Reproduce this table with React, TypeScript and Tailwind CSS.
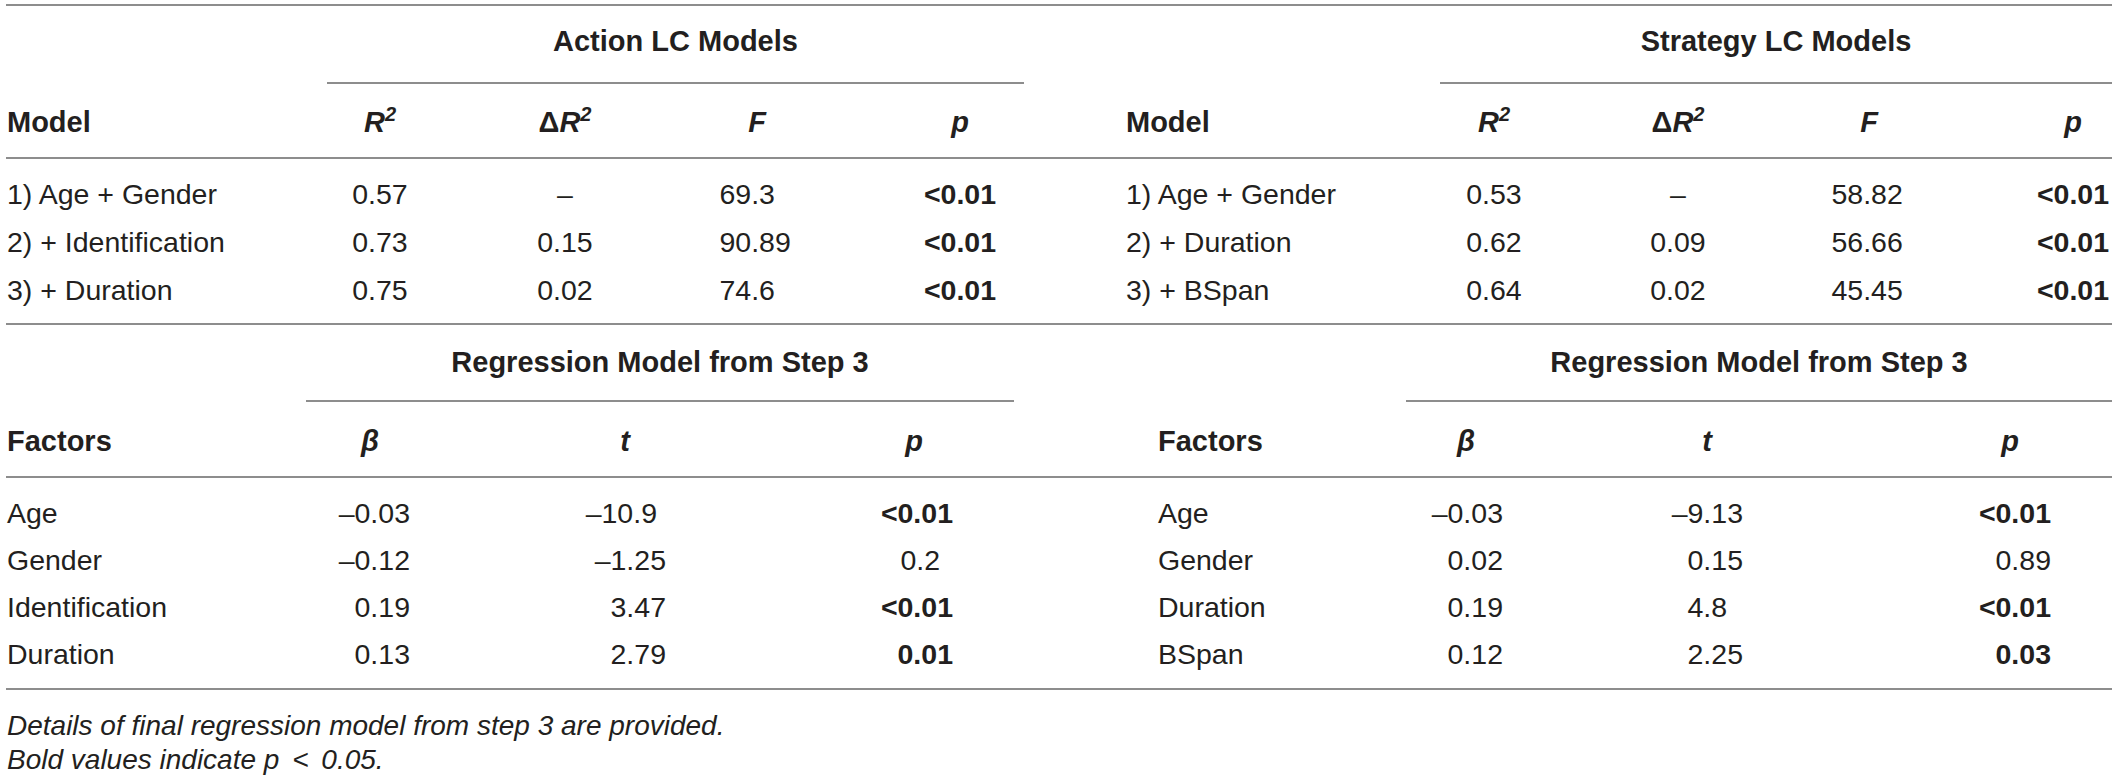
import React from "react";

type Cell = string | { t: string; b?: boolean; pad?: string };

const rule = "border-[#8d8d8d]";

// column boxes for the upper (LC models) block, left half then right half
const topCols = [
  "w-[314px] pl-[1px] text-left",
  "w-[120px] text-center",
  "ml-[65px] w-[120px] text-center",
  "ml-[72px] w-[120px] text-center",
  "ml-[83px] w-[120px] text-center",
  "ml-[106px] w-[308px] text-left",
  "w-[120px] text-center",
  "ml-[64px] w-[120px] text-center",
  "ml-[71px] w-[120px] text-center",
  "ml-[105px] w-[78px] text-center",
];

// column boxes for the lower (regression) block
const botCols = [
  "w-[300px] pl-[1px] text-left",
  "ml-[4px] w-[120px]",
  "ml-[135px] w-[120px]",
  "ml-[169px] w-[120px]",
  "ml-[184px] w-[248px] text-left",
  "w-[120px]",
  "ml-[121px] w-[120px]",
  "ml-[183px] w-[120px]",
];
const botVal = ["", "text-right pr-[20px]", "text-right pr-[19px]", "text-right pr-[21px]", "", "text-right pr-[23px]", "text-right pr-[24px]", "text-right pr-[19px]"];

const R2 = ({ delta }: { delta?: boolean }) => (
  <span className="font-bold italic">
    {delta && <span className="not-italic">Δ</span>}R
    <sup className="-top-[11px] text-[20px]">2</sup>
  </span>
);

const Hd = ({ children }: { children: React.ReactNode }) => (
  <span className="font-bold italic">{children}</span>
);

const topHead: React.ReactNode[] = [
  <span className="font-bold">Model</span>,
  <R2 />,
  <R2 delta />,
  <Hd>F</Hd>,
  <Hd>p</Hd>,
  <span className="font-bold">Model</span>,
  <R2 />,
  <R2 delta />,
  <Hd>F</Hd>,
  <Hd>p</Hd>,
];

const topRows: Cell[][] = [
  ["1) Age + Gender", "0.57", "–", "69.3", { t: "<0.01", b: true }, "1) Age + Gender", "0.53", "–", "58.82", { t: "<0.01", b: true }],
  ["2) + Identification", "0.73", "0.15", "90.89", { t: "<0.01", b: true }, "2) + Duration", "0.62", "0.09", "56.66", { t: "<0.01", b: true }],
  ["3) + Duration", "0.75", "0.02", "74.6", { t: "<0.01", b: true }, "3) + BSpan", "0.64", "0.02", "45.45", { t: "<0.01", b: true }],
];

const botHead: React.ReactNode[] = [
  <span className="font-bold">Factors</span>,
  <Hd>β</Hd>,
  <Hd>t</Hd>,
  <Hd>p</Hd>,
  <span className="font-bold">Factors</span>,
  <Hd>β</Hd>,
  <Hd>t</Hd>,
  <Hd>p</Hd>,
];

const botRows: Cell[][] = [
  ["Age", "–0.03", { t: "–10.9", pad: "mr-[9px]" }, { t: "<0.01", b: true }, "Age", "–0.03", "–9.13", { t: "<0.01", b: true }],
  ["Gender", "–0.12", "–1.25", { t: "0.2", pad: "mr-[13px]" }, "Gender", "0.02", "0.15", "0.89"],
  ["Identification", "0.19", "3.47", { t: "<0.01", b: true }, "Duration", "0.19", { t: "4.8", pad: "mr-[16px]" }, { t: "<0.01", b: true }],
  ["Duration", "0.13", "2.79", { t: "0.01", b: true }, "BSpan", "0.12", "2.25", { t: "0.03", b: true }],
];

const Txt = ({ c }: { c: Cell }) => {
  if (typeof c === "string") return <>{c}</>;
  return <span className={`inline-block ${c.b ? "font-bold" : ""} ${c.pad ?? ""}`}>{c.t}</span>;
};

export default function App() {
  return (
    <div className="min-h-screen bg-white px-[6px] font-['Liberation_Sans',Arial,sans-serif] text-[#231f20]">
      {/* upper block */}
      <div className={`mt-[4px] border-t-2 ${rule}`}>
        <div className="flex h-[78px]">
          <div className="w-[321px] shrink-0" />
          <div className={`flex w-[697px] shrink-0 items-center justify-center border-b-2 pb-[4px] text-[29px] font-bold ${rule}`}>
            Action LC Models
          </div>
          <div className="w-[416px] shrink-0" />
          <div className={`flex w-[672px] shrink-0 items-center justify-center border-b-2 pb-[4px] text-[29px] font-bold ${rule}`}>
            Strategy LC Models
          </div>
        </div>
        <div className={`flex h-[75px] items-center border-b-2 pt-[4px] text-[29px] leading-none ${rule}`}>
          {topHead.map((h, i) => (
            <div key={i} className={`shrink-0 ${topCols[i]}`}>
              {h}
            </div>
          ))}
        </div>
        <div className={`border-b-2 pt-[11px] pb-[9px] text-[28.5px] ${rule}`}>
          {topRows.map((r, ri) => (
            <div key={ri} className="flex h-[48px] items-center leading-none">
              {r.map((c, i) => (
                <div key={i} className={`shrink-0 ${topCols[i]}`}>
                  {i === 3 || i === 8 ? (
                    <span className="inline-block w-[75px] text-left">
                      <Txt c={c} />
                    </span>
                  ) : (
                    <Txt c={c} />
                  )}
                </div>
              ))}
            </div>
          ))}
        </div>
      </div>

      {/* lower block */}
      <div>
        <div className="flex h-[77px]">
          <div className="w-[300px] shrink-0" />
          <div className={`flex w-[708px] shrink-0 items-center justify-center border-b-2 text-[29px] font-bold ${rule}`}>
            Regression Model from Step 3
          </div>
          <div className="w-[392px] shrink-0" />
          <div className={`flex w-[706px] shrink-0 items-center justify-center border-b-2 text-[29px] font-bold ${rule}`}>
            Regression Model from Step 3
          </div>
        </div>
        <div className={`flex h-[76px] items-center border-b-2 pt-[5px] text-[29px] leading-none ${rule}`}>
          {botHead.map((h, i) => (
            <div key={i} className={`shrink-0 text-center ${botCols[i]}`}>
              {h}
            </div>
          ))}
        </div>
        <div className={`border-b-2 pt-[12px] pb-[10px] text-[28.5px] ${rule}`}>
          {botRows.map((r, ri) => (
            <div key={ri} className="flex h-[47px] items-center leading-none">
              {r.map((c, i) => (
                <div key={i} className={`shrink-0 ${botCols[i]} ${botVal[i]}`}>
                  <Txt c={c} />
                </div>
              ))}
            </div>
          ))}
        </div>
      </div>

      <div className="pt-[19px] pl-[1px] text-[28px] leading-[34px] italic">
        <p>Details of final regression model from step 3 are provided.</p>
        <p>
          Bold values indicate p <span className="mx-[5px]">&lt;</span> 0.05.
        </p>
      </div>
    </div>
  );
}
